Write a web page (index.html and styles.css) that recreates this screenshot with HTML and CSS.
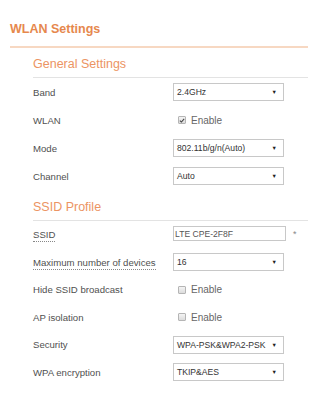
FILE: index.html
```html
<!DOCTYPE html>
<html>
<head>
<meta charset="utf-8">
<link rel="stylesheet" href="styles.css">
</head>
<body>
<div class="page">
  <h1 class="title">WLAN Settings</h1>
  <div class="section">
    <h2 class="heading">General Settings</h2>
    <div class="row">
      <div class="label">Band</div>
      <div class="select"><span>2.4GHz</span><span class="arrow">▼</span></div>
    </div>
    <div class="row">
      <div class="label">WLAN</div>
      <label class="check"><span class="box on"><svg viewBox="0 0 10 10" width="7" height="7"><path d="M1.5 5.2 L4 7.6 L8.6 2.2" fill="none" stroke="#444" stroke-width="1.8"/></svg></span>Enable</label>
    </div>
    <div class="row">
      <div class="label">Mode</div>
      <div class="select"><span>802.11b/g/n(Auto)</span><span class="arrow">▼</span></div>
    </div>
    <div class="row">
      <div class="label">Channel</div>
      <div class="select"><span>Auto</span><span class="arrow">▼</span></div>
    </div>
    <h2 class="heading second">SSID Profile</h2>
    <div class="row tight">
      <div class="label"><span class="dotted">SSID</span></div>
      <div class="input">LTE CPE-2F8F</div>
      <span class="star">*</span>
    </div>
    <div class="row tight">
      <div class="label"><span class="dotted">Maximum number of devices</span></div>
      <div class="select"><span>16</span><span class="arrow">▼</span></div>
    </div>
    <div class="row tight">
      <div class="label">Hide SSID broadcast</div>
      <label class="check"><span class="box"></span>Enable</label>
    </div>
    <div class="row tight">
      <div class="label">AP isolation</div>
      <label class="check"><span class="box"></span>Enable</label>
    </div>
    <div class="row tight">
      <div class="label">Security</div>
      <div class="select"><span>WPA-PSK&amp;WPA2-PSK</span><span class="arrow">▼</span></div>
    </div>
    <div class="row tight">
      <div class="label">WPA encryption</div>
      <div class="select"><span>TKIP&amp;AES</span><span class="arrow">▼</span></div>
    </div>
  </div>
</div>
</body>
</html>
```

FILE: styles.css
```css
* { box-sizing: border-box; }
html, body { margin: 0; padding: 0; background: #fff; }
body { font-family: "Liberation Sans", Arial, sans-serif; color: #555; }
.page { margin: 0 11px 0 10px; }
.title {
  margin: 0;
  padding: 20px 0 8px;
  font-size: 12.5px;
  line-height: 18px;
  font-weight: bold;
  color: #e6884d;
  border-bottom: 2px solid #f7d8c2;
}
.section { margin-left: 23px; }
.heading {
  margin: 0;
  padding: 7px 0 4px;
  font-size: 12.5px;
  line-height: 18px;
  font-weight: normal;
  color: #ec9463;
  border-bottom: 1px solid #e3e3e3;
}
.heading.second { padding-top: 8px; }
.row {
  height: 28px;
  display: flex;
  align-items: center;
}
.row.tight { height: 27.5px; }
.label {
  width: 140px;
  flex: none;
  font-size: 9.6px;
  color: #505050;
  white-space: nowrap;
}
.dotted {
  border-bottom: 1px dotted #888;
  padding-bottom: 1px;
}
.select {
  width: 111px;
  height: 18px;
  border: 1px solid #c8c8c8;
  background: #fff;
  display: flex;
  align-items: center;
  justify-content: space-between;
  padding: 0 6px 0 3px;
  font-size: 8.6px;
  color: #333;
  white-space: nowrap;
}
.input {
  width: 113px;
  height: 15px;
  border: 1px solid #c8c8c8;
  display: flex;
  align-items: center;
  padding: 0 1px;
  font-size: 8.6px;
  color: #555;
  margin-top: -2px;
}
.arrow { font-size: 5.5px; color: #222; }
.star { margin-left: 7px; font-size: 9px; color: #888; align-self: flex-start; margin-top: 8px; }
.check {
  display: flex;
  align-items: center;
  font-size: 10px;
  color: #666;
  margin-left: 5px;
}
.box {
  width: 8px;
  height: 8px;
  border: 1px solid #b5b5b5;
  background: linear-gradient(#f4f4f4, #dcdcdc);
  border-radius: 1px;
  margin-right: 5px;
  display: flex;
  align-items: center;
  justify-content: center;
}
```
